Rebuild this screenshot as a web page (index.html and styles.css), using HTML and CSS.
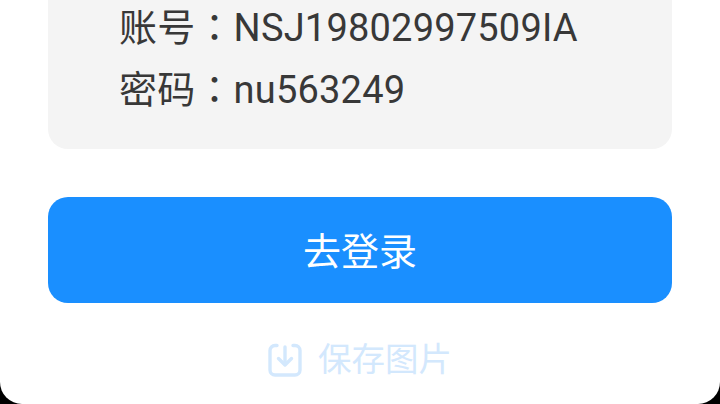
FILE: index.html
```html
<!DOCTYPE html>
<html lang="zh-CN">
<head>
    <meta charset="UTF-8">
    <meta name="viewport" content="width=device-width, initial-scale=1.0">
    <title>账号信息</title>
    <link rel="stylesheet" href="styles.css">
</head>
<body>
    <div class="dialog">
        <div class="account-card">
            <div class="account-row">账号<span class="colon" lang="zh-TW">：</span>NSJ19802997509IA</div>
            <div class="account-row">密码<span class="colon" lang="zh-TW">：</span>nu563249</div>
        </div>
        <button class="login-button">去登录</button>
        <div class="save-image">
            <svg class="save-icon" viewBox="0 0 34 34" fill="none" stroke="currentColor" stroke-width="3.4" stroke-linecap="round" stroke-linejoin="round">
                <path d="M9 2.5H7A5 5 0 0 0 2 7.5V27A5 5 0 0 0 7 32H27A5 5 0 0 0 32 27V7.5A5 5 0 0 0 27 2.5H25"/>
                <path d="M17 4V21"/>
                <path d="M10.5 15.5L17 22L23.500 15.500"/>
            </svg>
            <span class="save-label">保存图片</span>
        </div>
    </div>
</body>
</html>
```

FILE: styles.css
```css
* {
    margin: 0;
    padding: 0;
    box-sizing: border-box;
}

html, body {
    width: 720px;
    height: 404px;
    overflow: hidden;
    background: #000;
}

body {
    font-family: Roboto, "Noto Sans CJK SC", sans-serif;
}

.dialog {
    width: 720px;
    height: 404px;
    background: #fff;
    border-radius: 0 0 22px 22px;
    padding: 0 48px;
    display: flex;
    flex-direction: column;
    justify-content: flex-end;
    overflow: hidden;
}

.account-card {
    flex-shrink: 0;
    background: #f4f4f4;
    border-radius: 0 0 20px 20px;
    padding: 0 71px 28px;
}

.account-row {
    font-size: 38px;
    height: 62px;
    line-height: 62px;
    letter-spacing: 0.2px;
    color: #383838;
    white-space: nowrap;
}

.colon {
    font-family: "Noto Sans CJK TC", sans-serif;
    line-height: 1;
}

.login-button {
    flex-shrink: 0;
    height: 106px;
    margin-top: 48px;
    padding-bottom: 3px;
    border: none;
    border-radius: 20px;
    background: #1a8fff;
    color: #fff;
    font-family: inherit;
    font-size: 38px;
}

.save-image {
    flex-shrink: 0;
    height: 101px;
    padding-top: 12px;
    display: flex;
    align-items: center;
    justify-content: center;
    gap: 16px;
    color: #d3e8fd;
    font-size: 33.500px;
}

.save-label {
    padding-bottom: 6px;
}

.save-icon {
    width: 34px;
    height: 34px;
}
```
